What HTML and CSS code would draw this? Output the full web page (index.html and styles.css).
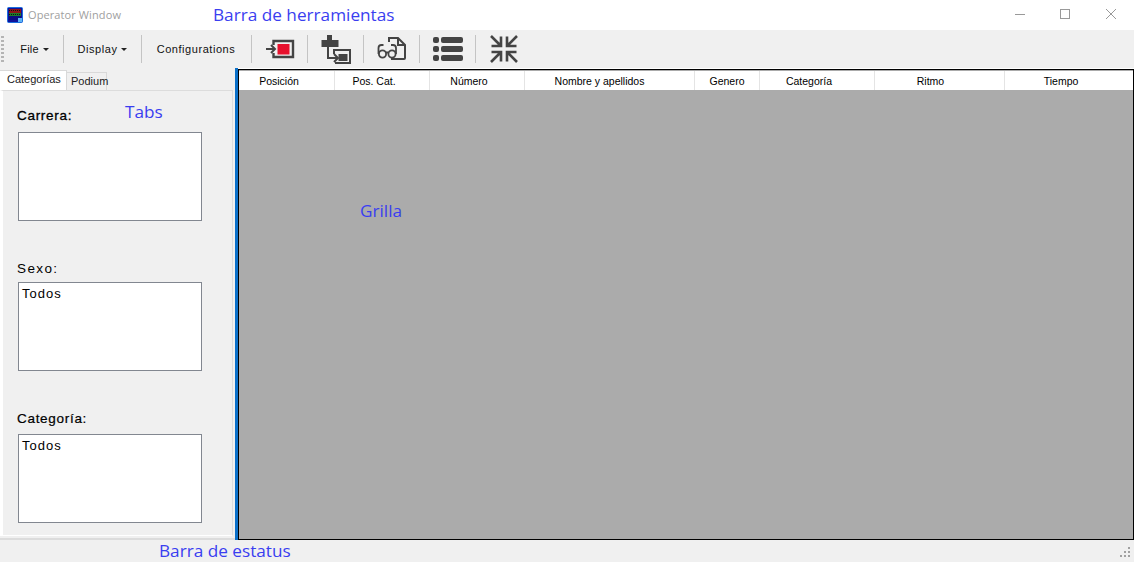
FILE: index.html
```html
<!DOCTYPE html>
<html lang="es">
<head>
<meta charset="utf-8">
<title>Operator Window</title>
<link rel="stylesheet" href="styles.css">
</head>
<body>
<div class="app">
  <header class="titlebar">
    <svg class="appicon" width="16" height="16" viewBox="0 0 16 16">
      <rect x="0.5" y="0.5" width="15" height="15" rx="1" fill="#10129a" stroke="#1a6fe0"/>
      <rect x="2" y="2" width="12" height="4" fill="#8c1418"/>
      <rect x="2" y="6" width="12" height="3" fill="#1c7a2c"/>
      <rect x="2" y="9" width="12" height="4" fill="#0c0c80"/>
      <path d="M2 3.500h12M2 7.500h12" stroke="#111" stroke-dasharray="1 1"/>
      <rect x="11" y="11" width="4" height="4" fill="#5fb4f5"/>
    </svg>
    <span class="apptitle">Operator Window</span>
    <div class="winbtns">
      <svg width="14" height="14" viewBox="0 0 14 14"><path d="M2 7.500h10" stroke="#999"/></svg>
      <svg width="14" height="14" viewBox="0 0 14 14"><rect x="2.500" y="2.500" width="9" height="9" fill="none" stroke="#999"/></svg>
      <svg class="closebtn" width="14" height="14" viewBox="0 0 14 14"><path d="M2 2l10 10M12 2L2 12" stroke="#999"/></svg>
    </div>
  </header>

  <nav class="toolbar">
    <span class="grip"></span>
    <button class="menu m-file">File <i class="caret"></i></button>
    <span class="sep"></span>
    <button class="menu m-display">Display <i class="caret"></i></button>
    <span class="sep"></span>
    <button class="menu m-config">Configurations</button>
    <span class="sep"></span>
    <span class="tool">
      <svg width="30" height="22" viewBox="0 0 30 22">
        <path d="M1 11h9M6 7l4 4-4 4" fill="none" stroke="#444" stroke-width="2"/>
        <path d="M8.500 7V3H28v16H8.500v-4" fill="none" stroke="#444" stroke-width="2.400"/>
        <rect x="12.500" y="6" width="12" height="10.500" fill="#e8112d"/>
      </svg>
    </span>
    <span class="sep"></span>
    <span class="tool">
      <svg width="32" height="30" viewBox="0 0 32 30">
        <path d="M7 1h5v5h6.500v7H1.500V6H7z" fill="#444"/>
        <path d="M8 13v11h9M14 20l4 4-4 4" fill="none" stroke="#444" stroke-width="2"/>
        <path d="M14 20v-4h16v13H15" fill="none" stroke="#444" stroke-width="2"/>
        <rect x="18.500" y="20" width="9" height="7" fill="#444"/>
      </svg>
    </span>
    <span class="sep"></span>
    <span class="tool">
      <svg width="30" height="26" viewBox="0 0 30 26">
        <path d="M12 6V2h9l7 7v13a1 1 0 0 1-1 1H14" fill="none" stroke="#444" stroke-width="2"/>
        <path d="M21 2v7h7" fill="none" stroke="#444" stroke-width="2"/>
        <circle cx="5.500" cy="18" r="3.600" fill="none" stroke="#444" stroke-width="1.800"/>
        <circle cx="15" cy="18" r="3.600" fill="none" stroke="#444" stroke-width="1.800"/>
        <path d="M1.500 18v-6q0-3 3-3h2M19 18v-6q0-3-3-3h-2M9 16.500h2.500" fill="none" stroke="#444" stroke-width="1.800"/>
      </svg>
    </span>
    <span class="sep"></span>
    <span class="tool">
      <svg width="30" height="26" viewBox="0 0 30 26">
        <rect x="0" y="1" width="6" height="6" rx="2" fill="#444"/>
        <rect x="0" y="10" width="6" height="6" rx="2" fill="#444"/>
        <rect x="0" y="19" width="6" height="6" rx="2" fill="#444"/>
        <rect x="8" y="1" width="22" height="6" rx="2" fill="#444"/>
        <rect x="8" y="10" width="22" height="6" rx="2" fill="#444"/>
        <rect x="8" y="19" width="22" height="6" rx="2" fill="#444"/>
      </svg>
    </span>
    <span class="sep"></span>
    <span class="tool">
      <svg width="30" height="30" viewBox="0 0 30 30">
        <path d="M2 2l9 9M2.500 12h9.500V2.500M28 2l-9 9M27.500 12H18V2.500M2 28l9-9M2.500 18h9.500v9.500M28 28l-9-9M27.500 18H18v9.500" fill="none" stroke="#444" stroke-width="2.600"/>
      </svg>
    </span>
  </nav>

  <main class="body">
    <aside class="side">
      <div class="tabs">
        <span class="tab active">Categorías</span>
        <span class="tab">Podium</span>
      </div>
      <section class="panel">
        <label class="fld-label l1">Carrera:</label>
        <div class="listbox"></div>
        <label class="fld-label l2">Sexo:</label>
        <div class="listbox">Todos</div>
        <label class="fld-label l3">Categoría:</label>
        <div class="listbox">Todos</div>
      </section>
    </aside>
    <div class="splitter"></div>
    <section class="grid">
      <div class="head">
        <span class="c c1">Posición</span>
        <span class="c c2">Pos. Cat.</span>
        <span class="c c3">Número</span>
        <span class="c c4">Nombre y apellidos</span>
        <span class="c c5">Genero</span>
        <span class="c c6">Categoría</span>
        <span class="c c7">Ritmo</span>
        <span class="c c8">Tiempo</span>
      </div>
    </section>
  </main>

  <footer class="status">
    <svg class="sizer" width="11" height="11" viewBox="0 0 11 11" fill="#a0a0a0">
      <rect x="8" y="0" width="2" height="2"/>
      <rect x="4" y="4" width="2" height="2"/><rect x="8" y="4" width="2" height="2"/>
      <rect x="0" y="8" width="2" height="2"/><rect x="4" y="8" width="2" height="2"/><rect x="8" y="8" width="2" height="2"/>
    </svg>
  </footer>

  <span class="note n-bar">Barra de herramientas</span>
  <span class="note n-tabs">Tabs</span>
  <span class="note n-grid">Grilla</span>
  <span class="note n-status">Barra de estatus</span>
</div>
</body>
</html>
```
FILE: styles.css
```css
* { box-sizing: border-box; }
html, body { margin: 0; padding: 0; }
body { width: 1134px; height: 562px; overflow: hidden; background: #fff; font-family: "Liberation Sans", Arial, sans-serif; font-size: 11px; color: #000; }
.app { position: relative; width: 1134px; height: 562px; display: flex; flex-direction: column; }

.titlebar { height: 30px; flex: none; display: flex; align-items: center; padding-left: 7px; background: #fff; }
.appicon { flex: none; }
.apptitle { margin: 0 0 2px 5px; font-family: "Open Sans", sans-serif; font-size: 11px; color: #a0a0a0; letter-spacing: 0.1px; }
.winbtns { margin-left: auto; display: flex; gap: 31px; padding: 0 16px 2px 0; }
.closebtn { margin-left: 1px; }

.toolbar { height: 38px; flex: none; display: flex; align-items: center; background: #f0f0f0; padding-left: 1px; }
.grip { width: 3px; height: 26px; background-image: repeating-linear-gradient(to bottom, #b4b4b4 0 2px, transparent 2px 4px); }
.menu { border: 0; background: none; padding: 0; font: inherit; color: #111; letter-spacing: 0.55px; display: flex; align-items: center; justify-content: center; }
.m-file { width: 59px; padding-left: 2px; letter-spacing: 0.2px; }
.m-display { width: 77px; }
.m-config { width: 109px; padding-right: 1px; }
.caret { display: inline-block; width: 0; height: 0; margin-left: 4px; border: 3px solid transparent; border-top-color: #222; border-bottom-width: 0; }
.sep { width: 1px; height: 28px; flex: none; background: #c4c4c4; }
.tool { display: flex; align-items: center; justify-content: center; flex: none; width: 55px; }

.body { flex: 1; min-height: 0; display: flex; }
.side { width: 235px; flex: none; display: flex; flex-direction: column; background: #f0f0f0; border-bottom: 2px solid #dcdcdc; }
.tabs { height: 22px; flex: none; display: flex; align-items: flex-end; padding-top: 2px; }
.tab { height: 18px; padding: 0 3px; line-height: 17px; border: 1px solid #d9d9d9; border-bottom: 0; margin-left: -1px; background: #f0f0f0; color: #222; }
.tab:last-child { width: 41px; padding-left: 4px; }
.tab.active { height: 20px; width: 67px; padding-left: 7px; line-height: 17px; margin-left: 0; background: #fff; border-left: 0; position: relative; z-index: 1; }
.panel { height: 446px; flex: none; width: 233px; padding-left: 15px; border-style: solid; border-width: 1px 1px 1px 3px; border-color: #dcdcdc #dcdcdc #fff #fff; background: #f0f0f0; display: flex; flex-direction: column; }
.fld-label { display: block; font-size: 13.500px; line-height: 16px; color: #000; letter-spacing: 0.7px; margin-left: -1px; }
.l1 { margin-top: 17px; margin-bottom: 8px; -webkit-text-stroke: 0.3px #000; }
.l2 { margin-top: 40px; margin-bottom: 5px; letter-spacing: 1.4px; }
.l3 { margin-top: 40px; margin-bottom: 7px; -webkit-text-stroke: 0.2px #000; }
.listbox { width: 184px; height: 89px; flex: none; border: 1px solid #828790; background: #fff; padding: 3px; font-size: 13px; line-height: 15px; letter-spacing: 1px; }

.splitter { width: 3px; flex: none; background: #0a6fc8; }
.grid { flex: 1; min-width: 0; background: #ababab; border: 1px solid #000; margin-top: 1px; padding-top: 1px; }
.head { height: 19px; display: flex; background: #fff; border-left: 1px solid #fff; }
.c { flex: none; text-align: center; font-size: 10.500px; line-height: 18px; padding-top: 1px; border-right: 1px solid #e4e4e4; color: #000; }
.c1 { width: 95px; padding-right: 16px; } .c2 { width: 95px; padding-right: 16px; } .c3 { width: 95px; padding-right: 16px; } .c4 { width: 170px; padding-right: 20px; }
.c5 { width: 65px; } .c6 { width: 115px; padding-right: 16px; } .c7 { width: 130px; padding-right: 18px; } .c8 { flex: 1; border-right: 0; padding-right: 16px; }

.status { height: 22px; flex: none; background: #f0f0f0; position: relative; display: flex; align-items: flex-end; justify-content: flex-end; padding: 0 3px 4px 0; }
.note { position: absolute; color: #3a3ef0; font-family: "Open Sans", sans-serif; font-size: 17.200px; line-height: 20px; white-space: nowrap; }
.n-bar { left: 213px; top: 5px; }
.n-tabs { left: 125px; top: 102px; }
.n-grid { left: 360px; top: 201px; }
.n-status { left: 159px; top: 541px; }
```
